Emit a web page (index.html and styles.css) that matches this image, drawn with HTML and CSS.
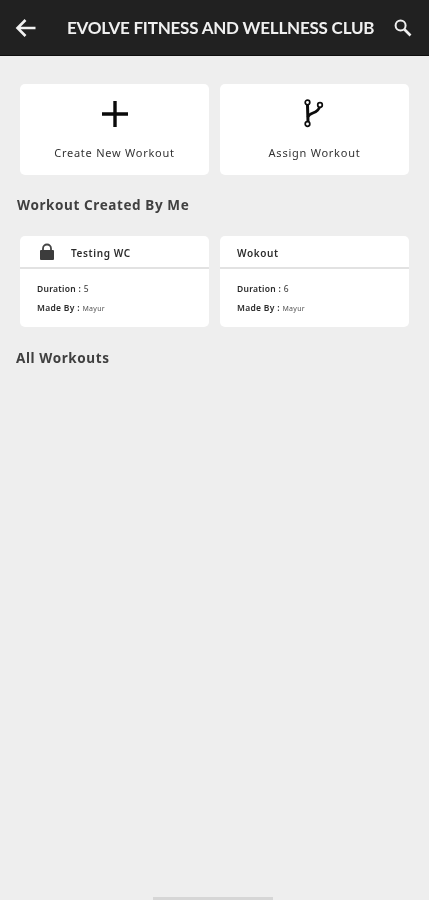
FILE: index.html
```html
<!DOCTYPE html>
<html lang="en">
<head>
<meta charset="utf-8">
<title>Workouts</title>
<link rel="stylesheet" href="styles.css">
</head>
<body>
<div class="screen">
  <header class="appbar">
    <svg class="back" width="22" height="20" viewBox="0 0 22 20"><path d="M20.500 10H3M10.500 2 2.500 10l8 8" fill="none" stroke="#f2f2f2" stroke-width="2.600"/></svg>
    <h1 class="title">EVOLVE FITNESS AND WELLNESS CLUB</h1>
    <svg class="search" width="20" height="20" viewBox="0 0 20 20"><circle cx="7.600" cy="7.600" r="5" fill="none" stroke="#f0f0f0" stroke-width="2"/><path d="m11.500 11.500 6 6" stroke="#f0f0f0" stroke-width="2.600"/></svg>
  </header>
  <main class="content">
    <section class="grid actions">
      <div class="card action">
        <svg class="action-icon" width="32" height="32" viewBox="0 0 32 32"><path d="M16 3v26M3 16h26" stroke="#0a0a0a" stroke-width="3.400"/></svg>
        <span class="action-label">Create New Workout</span>
      </div>
      <div class="card action">
        <svg class="action-icon" width="32" height="32" viewBox="0 0 32 32"><g fill="none" stroke="#0c0c0c"><path d="M8.500 7 9 24" stroke-width="3"/><path d="M9 19c1-5 10-3 11.500-10" stroke-width="2.800"/><circle cx="8.500" cy="4.500" r="2.300" stroke-width="1.700"/><circle cx="21" cy="7" r="2.300" stroke-width="1.700"/><circle cx="8.500" cy="26" r="2.300" stroke-width="1.700"/></g></svg>
        <span class="action-label">Assign Workout</span>
      </div>
    </section>
    <h2 class="section-title first">Workout Created By Me</h2>
    <section class="grid">
      <div class="card workout">
        <div class="workout-head">
          <svg class="lock" width="16" height="18" viewBox="0 0 16 18"><path d="M4 8V5.500a4 4 0 0 1 8 0V8" fill="none" stroke="#444" stroke-width="1.800"/><rect x="1" y="7" width="14" height="10" rx="1" fill="#3c3c3c"/></svg>
          <span class="workout-name">Testing WC</span>
        </div>
        <div class="workout-body">
          <p class="meta"><b>Duration :</b> 5</p>
          <p class="meta"><b>Made By :</b> <span class="author">Mayur</span></p>
        </div>
      </div>
      <div class="card workout">
        <div class="workout-head plain">
          <span class="workout-name">Wokout</span>
        </div>
        <div class="workout-body">
          <p class="meta"><b>Duration :</b> 6</p>
          <p class="meta"><b>Made By :</b> <span class="author">Mayur</span></p>
        </div>
      </div>
    </section>
    <h2 class="section-title second">All Workouts</h2>
  </main>
  <div class="home-bar"></div>
</div>
</body>
</html>
```
FILE: styles.css
```css
* { box-sizing: border-box; margin: 0; padding: 0; }
html, body { height: 100%; }
body { background: #eeeeee; font-family: "Noto Sans", sans-serif; overflow: hidden; }
.screen { width: 429px; height: 900px; display: flex; flex-direction: column; background: #eeeeee; filter: blur(0.45px); }
.appbar { height: 56px; flex: none; display: flex; align-items: center; background: #212121; border-bottom: 1px solid #0f0f0f; padding: 0 16px 0 15px; }
.back { flex: none; }
.title { flex: 1; margin-left: 30px; font-family: Lato, sans-serif; font-size: 17px; font-weight: 700; color: #f0f0f0; white-space: nowrap; letter-spacing: -0.220px; }
.search { flex: none; }
.content { flex: 1; padding: 28px 20px 0 20px; }
.grid { display: grid; grid-template-columns: 189px 189px; column-gap: 11px; }
.card { background: #fff; border-radius: 5px; height: 91px; }
.action { display: flex; flex-direction: column; align-items: center; padding-top: 14px; }
.action-icon { flex: none; }
.action-label { margin-top: 15px; font-size: 11px; color: #333; letter-spacing: 0.750px; }
.section-title { font-size: 13.500px; font-weight: 700; color: #404040; letter-spacing: 0.600px; line-height: 20px; }
.first { margin: 20px 0 21px -3px; }
.second { margin: 21px 0 0 -4px; }
.workout { display: flex; flex-direction: column; }
.workout-head { height: 33px; flex: none; display: flex; align-items: center; padding-left: 19px; border-bottom: 2px solid #e2e2e2; }
.workout-head.plain { padding-left: 17px; }
.lock { flex: none; margin-right: 16px; }
.workout-name { font-size: 10px; font-weight: 600; color: #2c2c2c; letter-spacing: 0.600px; padding-top: 2px; }
.workout-body { padding: 14px 0 0 17px; display: flex; flex-direction: column; gap: 8px; }
.meta { font-size: 8.500px; line-height: 11px; color: #333; letter-spacing: 0.300px; }
.meta b { font-weight: 600; color: #2a2a2a; }
.author { font-size: 7px; color: #555; }
.home-bar { flex: none; width: 120px; height: 3px; margin: 0 0 0 153px; background: #d6d6d6; }
```
